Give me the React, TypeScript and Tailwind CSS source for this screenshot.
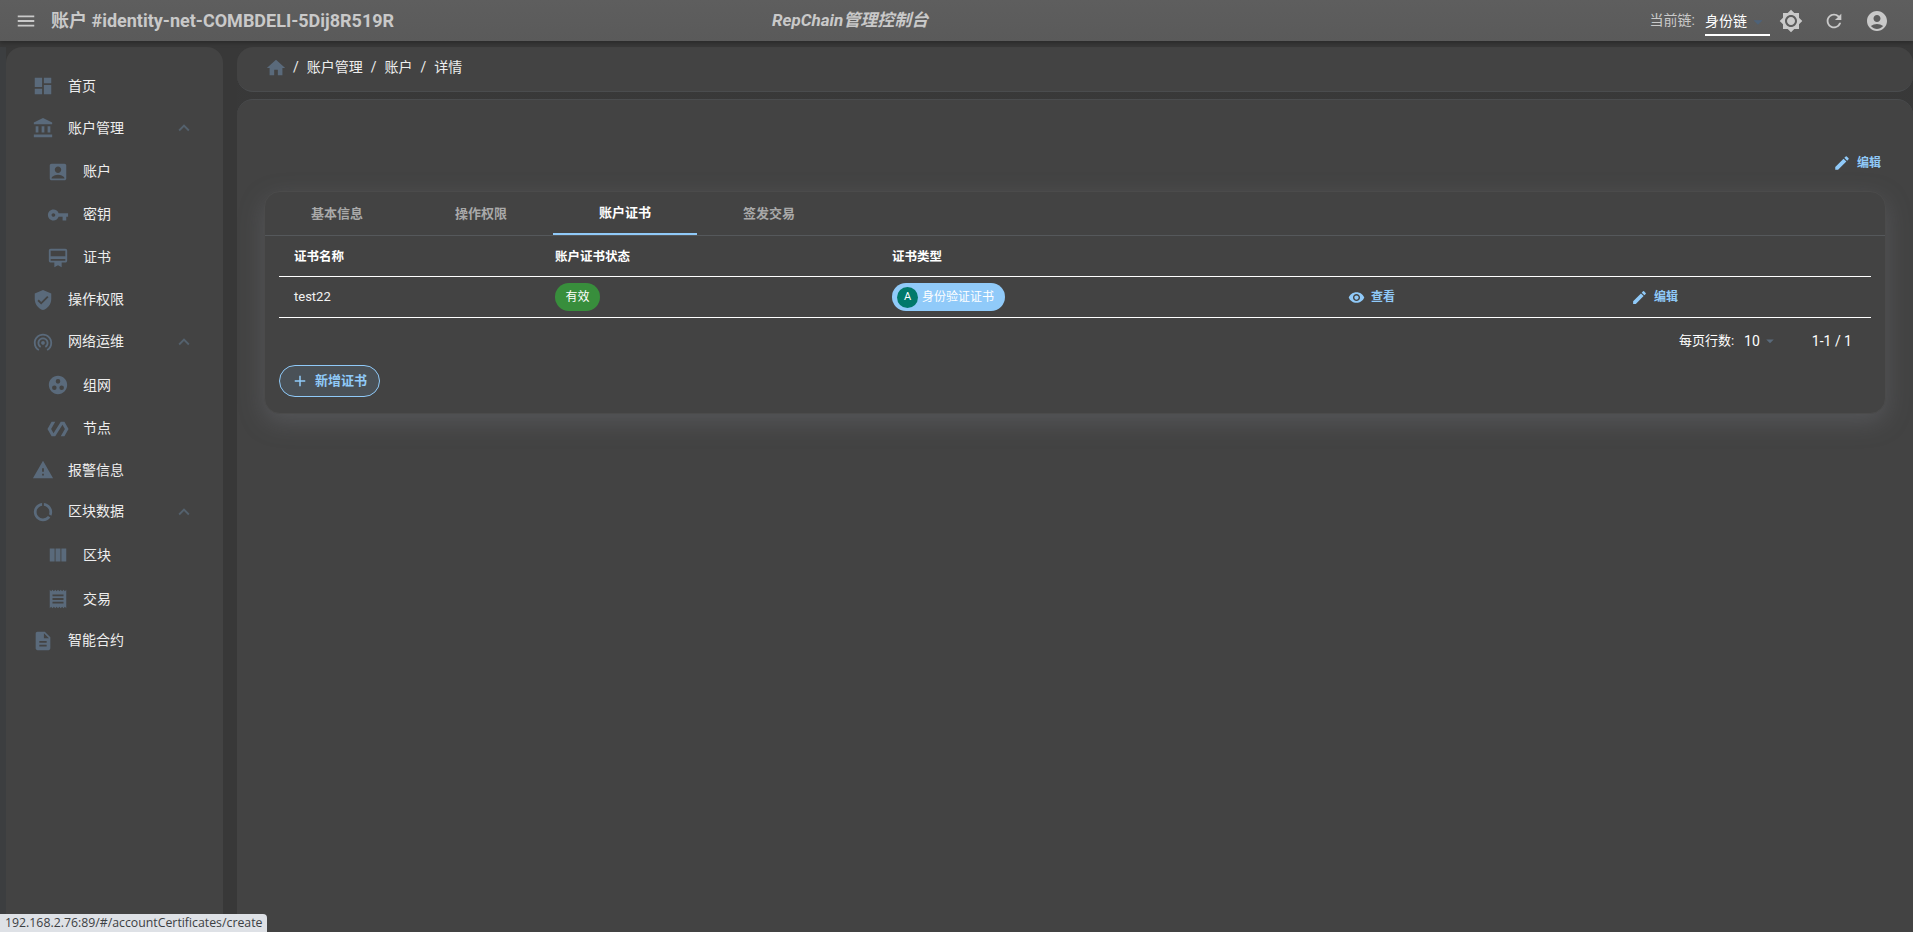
import {
  MdAccountBalance,
  MdAccountBox,
  MdAccountCircle,
  MdAdd,
  MdArrowDropDown,
  MdBrightness7,
  MdCardMembership,
  MdDashboard,
  MdDataUsage,
  MdDescription,
  MdEdit,
  MdExpandLess,
  MdGroupWork,
  MdHome,
  MdMenu,
  MdPolymer,
  MdReceipt,
  MdRefresh,
  MdVerifiedUser,
  MdViewColumn,
  MdVisibility,
  MdVpnKey,
  MdWarning,
  MdWifiTethering,
} from 'react-icons/md';

const navItems = [
  { label: '首页', icon: MdDashboard, height: 'h-[42px]' },
  { label: '账户管理', icon: MdAccountBalance, height: 'h-[42px]', expandable: true },
  { label: '账户', icon: MdAccountBox, height: 'h-[43px]', sub: true },
  { label: '密钥', icon: MdVpnKey, height: 'h-[43px]', sub: true },
  { label: '证书', icon: MdCardMembership, height: 'h-[43px]', sub: true },
  { label: '操作权限', icon: MdVerifiedUser, height: 'h-[43px]' },
  { label: '网络运维', icon: MdWifiTethering, height: 'h-[41px]', expandable: true },
  { label: '组网', icon: MdGroupWork, height: 'h-[44px]', sub: true },
  { label: '节点', icon: MdPolymer, height: 'h-[43px]', sub: true },
  { label: '报警信息', icon: MdWarning, height: 'h-[42px]' },
  { label: '区块数据', icon: MdDataUsage, height: 'h-[41px]', expandable: true },
  { label: '区块', icon: MdViewColumn, height: 'h-[44px]', sub: true },
  { label: '交易', icon: MdReceipt, height: 'h-[44px]', sub: true },
  { label: '智能合约', icon: MdDescription, height: 'h-[41px]' },
];

const tabs = ['基本信息', '操作权限', '账户证书', '签发交易'];

const Header = () => (
  <header className="relative z-10 flex h-[41px] shrink-0 items-center bg-gradient-to-b from-[#5e5e5e] to-[#5a5a5a] pl-[15px] text-[#c9c9c9] shadow-[0_2px_4px_rgba(0,0,0,0.25)]">
    <MdMenu className="h-[22px] w-[22px] shrink-0" />
    <div className="ml-[14px] w-[721px] shrink-0 text-[18px] font-bold">账户 #identity-net-COMBDELI-5Dij8R519R</div>
    <div className="text-[17px] font-bold italic">RepChain管理控制台</div>
    <div className="ml-auto flex items-center pr-[24px]">
      <span className="text-[14px]">当前链:</span>
      <div className="ml-[10px] flex h-[30px] w-[65px] items-center border-b-2 border-white pt-[4px] text-[14px] text-white">
        <span className="shrink-0">身份链</span>
        <MdArrowDropDown className="h-[22px] w-[22px] shrink-0 text-[#4e6278]" />
      </div>
      <MdBrightness7 className="ml-[9px] h-[24px] w-[24px]" />
      <MdRefresh className="ml-[20px] h-[22px] w-[22px]" />
      <MdAccountCircle className="ml-[20px] h-[24px] w-[24px]" />
    </div>
  </header>
);

const Sidebar = () => (
  <aside className="flex w-[217px] shrink-0 flex-col rounded-t-[16px] bg-[#434343] pt-[18px]">
    {navItems.map((item) => {
      const Icon = item.icon;
      return (
        <div
          key={item.label}
          className={`flex shrink-0 items-center text-[14px] text-[#eeeeee] ${item.height} ${item.sub ? 'pl-[41px] pt-[2px]' : 'pl-[26px]'}`}
        >
          <Icon className="h-[22px] w-[22px] shrink-0 text-[#5a6a7b]" />
          <span className={item.sub ? 'ml-[14px]' : 'ml-[14px] w-[105px]'}>{item.label}</span>
          {item.expandable && <MdExpandLess className="h-[22px] w-[22px] text-[#54616d]" />}
        </div>
      );
    })}
  </aside>
);

const Breadcrumb = () => (
  <div className="flex h-[45px] shrink-0 items-center gap-[8px] rounded-[16px] border-b border-[#4a4c4e] bg-[#434343] pb-[3px] pl-[28px] text-[14px] text-[#eeeeee]">
    <MdHome className="mr-[-2px] h-[22px] w-[22px] text-[#5a6a7b]" />
    <span>/</span>
    <span>账户管理</span>
    <span>/</span>
    <span>账户</span>
    <span>/</span>
    <span>详情</span>
  </div>
);

const CertTable = () => (
  <div className="px-[14px] text-[13px] text-[#f2f2f2]">
    <div className="grid h-[41px] grid-cols-[276px_337px_456px_283px_1fr] items-center border-b border-white pt-[3px] text-[12.5px] font-bold text-white">
      <div className="pl-[15px]">证书名称</div>
      <div>账户证书状态</div>
      <div>证书类型</div>
      <div />
      <div />
    </div>
    <div className="grid h-[41px] grid-cols-[276px_337px_456px_283px_1fr] items-center border-b border-white text-[12px]">
      <div className="pl-[15px] text-[13px]">test22</div>
      <div>
        <span className="inline-flex h-[28px] w-[45px] items-center justify-center rounded-full bg-[#388e3c] text-white">有效</span>
      </div>
      <div>
        <span className="inline-flex h-[28px] w-[113px] items-center rounded-full bg-[#90caf9] pl-[5px] text-white">
          <span className="mr-[4px] flex h-[21px] w-[21px] items-center justify-center rounded-full bg-[#00796b] text-[11px]">A</span>
          身份验证证书
        </span>
      </div>
      <div className="flex items-center gap-[6px] font-bold text-[#90caf9]">
        <MdVisibility className="h-[17px] w-[17px]" />
        查看
      </div>
      <div className="flex items-center gap-[6px] font-bold text-[#90caf9]">
        <MdEdit className="h-[17px] w-[17px]" />
        编辑
      </div>
    </div>
    <div className="flex h-[46px] items-center justify-end pr-[19px] text-[13px] text-white">
      <span>每页行数:</span>
      <span className="ml-[10px] text-[14px]">10</span>
      <MdArrowDropDown className="ml-[1px] h-[18px] w-[18px] text-[#5a6a7b]" />
      <span className="ml-[33px] text-[14px]">1-1 / 1</span>
    </div>
    <button className="mt-[1px] flex h-[32px] w-[101px] items-center rounded-full border border-[#90caf9] bg-[#4a5157] pl-[11px] text-[13px] font-bold text-[#90caf9]">
      <MdAdd className="mr-[6px] h-[18px] w-[18px]" />
      新增证书
    </button>
  </div>
);

export default function App() {
  return (
    <div className="relative flex h-[932px] w-[1913px] flex-col overflow-hidden bg-[#383838] font-['Roboto','Noto_Sans_CJK_SC',sans-serif]">
      <Header />
      <div className="flex min-h-0 flex-1 pt-[6px]">
        <div className="w-[6px] shrink-0 bg-[#3c3e40]" />
        <Sidebar />
        <div className="ml-[14px] flex min-w-0 flex-1 flex-col gap-[7px] bg-gradient-to-b from-[#383838] to-[#414345]">
          <Breadcrumb />
          <main className="flex flex-1 flex-col rounded-t-[16px] border-t border-[#4a4c4e] bg-[#434343] px-[27px]">
            <div className="flex h-[91px] shrink-0 items-end justify-end gap-[6px] pb-[19px] pr-[5px] text-[12px] font-bold text-[#90caf9]">
              <MdEdit className="h-[18px] w-[18px]" />
              编辑
            </div>
            <section className="h-[223px] rounded-[16px] border border-[#4b4b4b] bg-[#434343] shadow-[0_8px_24px_rgba(120,124,132,0.35)]">
              <div className="flex h-[44px] border-b border-[#55585b]">
                {tabs.map((tab) => (
                  <div
                    key={tab}
                    className={`flex w-[144px] items-center justify-center text-[13px] font-bold ${tab === '账户证书' ? 'border-b-2 border-[#90caf9] text-white' : 'text-[#a9a9a9]'}`}
                  >
                    {tab}
                  </div>
                ))}
              </div>
              <CertTable />
            </section>
          </main>
        </div>
      </div>
      <div className="absolute bottom-0 left-0 flex h-[18px] w-[267px] items-center rounded-tr-[4px] bg-[#dee1e6] pl-[5px] font-['Open_Sans',sans-serif] text-[12.3px] text-[#3c4043]">
        192.168.2.76:89/#/accountCertificates/create
      </div>
    </div>
  );
}
